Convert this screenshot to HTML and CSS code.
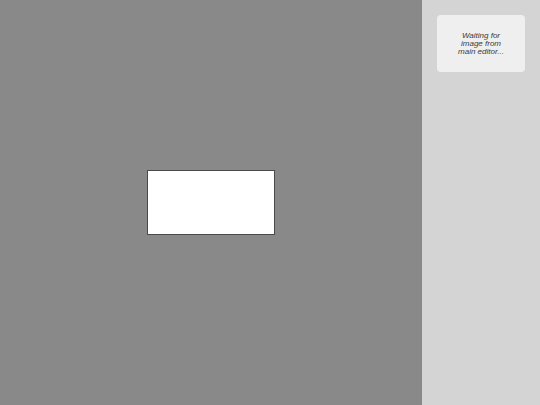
FILE: index.html
```
<!DOCTYPE html>
<html>
<head>
<meta charset="utf-8">
<link rel="stylesheet" href="styles.css">
</head>
<body>
<div class="app">
  <main class="stage">
    <div class="canvas"></div>
  </main>
  <aside class="sidebar">
    <div class="card">
      <p class="msg">Waiting for<br>image from<br>main editor...</p>
    </div>
  </aside>
</div>
</body>
</html>
```
FILE: styles.css
```
html, body {
  margin: 0;
  padding: 0;
  width: 540px;
  height: 405px;
  overflow: hidden;
  font-family: "Liberation Sans", Arial, sans-serif;
}
.app {
  display: flex;
  width: 540px;
  height: 405px;
}
.stage {
  width: 422px;
  height: 405px;
  background: #898989;
  display: flex;
  align-items: center;
  justify-content: center;
}
.canvas {
  width: 126px;
  height: 63px;
  background: #ffffff;
  border: 1px solid #4a4a4a;
}
.sidebar {
  flex: 1;
  background: #d4d4d4;
  padding: 15px;
  box-sizing: border-box;
}
.card {
  height: 57px;
  background: #efefef;
  border-radius: 4px;
  display: flex;
  align-items: center;
  justify-content: center;
}
.msg {
  margin: 0;
  font-size: 8px;
  line-height: 8px;
  font-style: italic;
  color: #3a3a3a;
  text-align: center;
}
```
